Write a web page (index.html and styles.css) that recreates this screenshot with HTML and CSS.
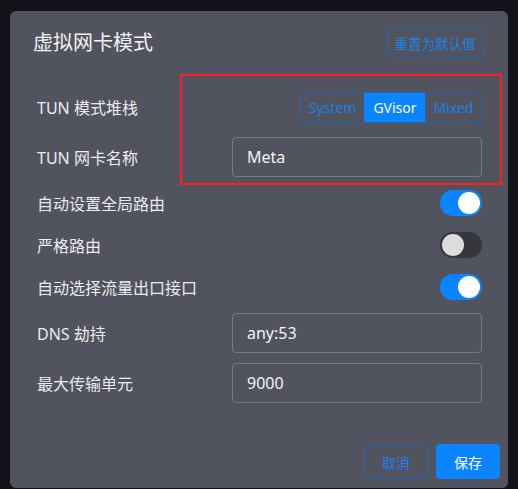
FILE: index.html
```html
<!DOCTYPE html>
<html lang="zh-CN">
<head>
    <meta charset="UTF-8">
    <meta name="viewport" content="width=device-width, initial-scale=1.0">
    <title>虚拟网卡模式</title>
    <link rel="stylesheet" href="styles.css">
</head>
<body>
    <div class="dialog">
        <div class="header">
            <h2 class="title">虚拟网卡模式</h2>
            <button class="btn-outline reset">重置为默认值</button>
        </div>

        <div class="rows">
            <div class="row">
                <span class="label">TUN 模式堆栈</span>
                <div class="segmented">
                    <button class="seg">System</button>
                    <button class="seg active">GVisor</button>
                    <button class="seg">Mixed</button>
                </div>
            </div>
            <div class="row">
                <span class="label">TUN 网卡名称</span>
                <input type="text" class="field" value="Meta">
            </div>
            <div class="row switch-row">
                <span class="label">自动设置全局路由</span>
                <span class="switch on"><span class="knob"></span></span>
            </div>
            <div class="row switch-row">
                <span class="label">严格路由</span>
                <span class="switch"><span class="knob"></span></span>
            </div>
            <div class="row switch-row">
                <span class="label">自动选择流量出口接口</span>
                <span class="switch on"><span class="knob"></span></span>
            </div>
            <div class="row">
                <span class="label">DNS 劫持</span>
                <input type="text" class="field" value="any:53">
            </div>
            <div class="row">
                <span class="label">最大传输单元</span>
                <input type="text" class="field" value="9000">
            </div>
        </div>

        <div class="footer">
            <button class="btn-outline">取消</button>
            <button class="btn-primary">保存</button>
        </div>

        <!-- highlight box -->
        <div class="highlight"></div>
    </div>
</body>
</html>
```

FILE: styles.css
```css
* {
    margin: 0;
    padding: 0;
    box-sizing: border-box;
    font-family: "Noto Sans", "Noto Sans CJK SC", sans-serif;
}

body {
    background: #131419;
    min-height: 100vh;
    padding: 11px 10px 0 10px;
}

.dialog {
    position: relative;
    width: 498px;
    height: 477px;
    background: #51535e;
    border-radius: 6px;
    color: #ececec;
}

.header {
    display: flex;
    justify-content: space-between;
    align-items: flex-start;
    padding: 16px 25px 0 23px;
    height: 71px;
}

.title {
    font-size: 20px;
    font-weight: normal;
    line-height: 31px;
    color: #f2f2f2;
}

button {
    font-size: 14px;
    border-radius: 4px;
    cursor: pointer;
    background: none;
}

.btn-outline {
    border: 1px solid #2265b0;
    color: #1a82ec;
    width: 64px;
    height: 35px;
}

.reset {
    width: 96px;
    height: 31px;
    font-size: 13.5px;
    padding: 0;
}

.btn-primary {
    border: none;
    background: #0a84ff;
    color: #fff;
    width: 64px;
    height: 35px;
}

.rows {
    padding: 0 26px;
}

.row {
    display: flex;
    justify-content: space-between;
    align-items: center;
    height: 50px;
}

.switch-row {
    height: 42px;
}

.label {
    font-size: 16px;
    color: #ececec;
    padding-left: 1px;
}

.segmented {
    display: flex;
    height: 31px;
    border: 1px solid #2265b0;
    border-radius: 4px;
    overflow: hidden;
}

.seg {
    border: none;
    border-radius: 0;
    color: #1a7fe6;
    font-size: 14px;
    padding: 0;
}

.seg:first-child {
    width: 63px;
}

.seg:nth-child(2) {
    width: 61px;
}

.seg:last-child {
    width: 56px;
}

.seg + .seg {
    border-left: 1px solid #2265b0;
}

.seg.active {
    background: #0a84ff;
    color: #fff;
    border-left-color: #0a84ff;
}

.field {
    width: 250px;
    height: 40px;
    background: transparent;
    border: 1px solid #797b85;
    border-radius: 4px;
    color: #f4f4f4;
    font-size: 16px;
    padding: 0 14px;
    outline: none;
}

.switch {
    display: flex;
    align-items: center;
    width: 42px;
    height: 26px;
    border-radius: 13px;
    background: #36373d;
    padding: 2px;
}

.switch .knob {
    width: 22px;
    height: 22px;
    border-radius: 50%;
    background: #dcdcdc;
}

.switch.on {
    background: #0a84ff;
    justify-content: flex-end;
}

.switch.on .knob {
    background: #fff;
}

.footer {
    display: flex;
    justify-content: flex-end;
    gap: 8px;
    padding: 36px 8px 0 0;
}

.highlight {
    position: absolute;
    left: 170px;
    top: 63px;
    width: 322px;
    height: 111px;
    border: 2px solid #ff1f1f;
    pointer-events: none;
}
```
